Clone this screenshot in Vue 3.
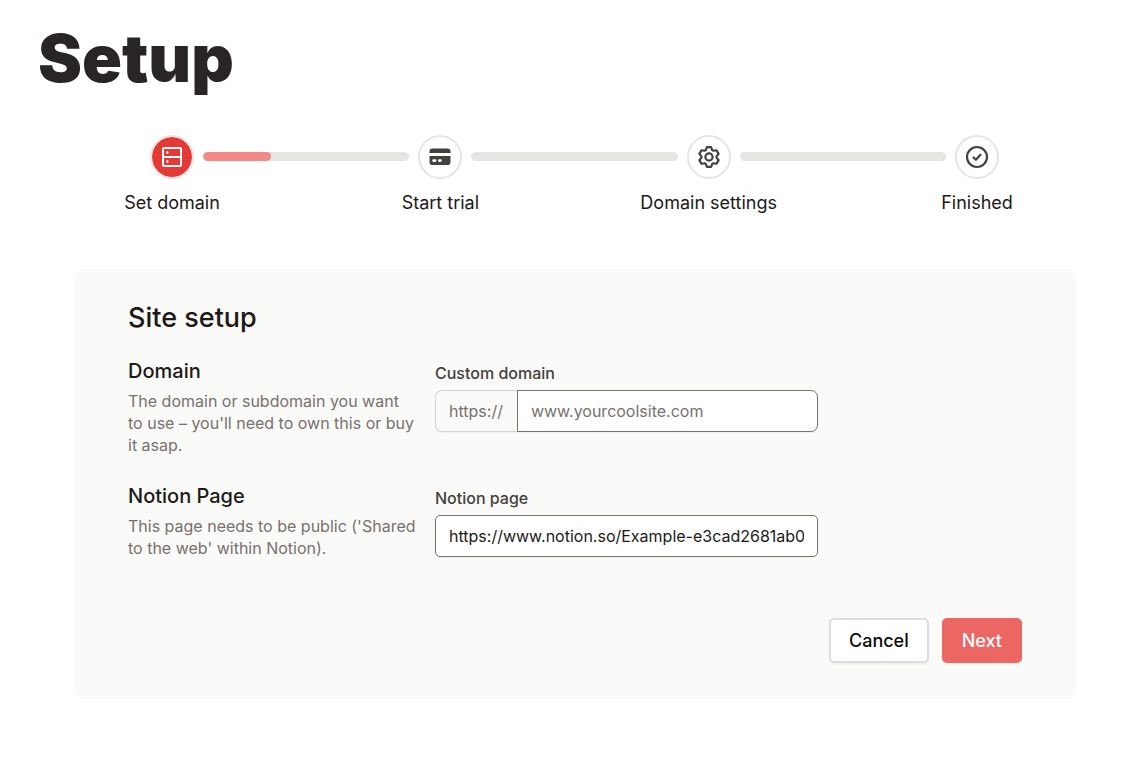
<script setup>
import { ref } from 'vue'

const steps = [
  { label: 'Set domain', icon: 'server', progress: 33, active: true },
  { label: 'Start trial', icon: 'card', progress: 0 },
  { label: 'Domain settings', icon: 'gear', progress: 0 },
  { label: 'Finished', icon: 'check' },
]

// Outline of a six-toothed cog centred on 12,12.
const tooth = [
  [-25, 7.6],
  [-12, 10.1],
  [12, 10.1],
  [25, 7.6],
]
const cogPoints = [0, 60, 120, 180, 240, 300]
  .flatMap((turn) =>
    tooth.map(([angle, radius]) => {
      const a = ((turn + angle) * Math.PI) / 180
      return `${(12 + radius * Math.sin(a)).toFixed(2)},${(12 - radius * Math.cos(a)).toFixed(2)}`
    })
  )
  .join(' ')

const domain = ref('')
const notionPage = ref('https://www.notion.so/Example-e3cad2681ab04f5c9d7e')
</script>

<template>
  <main class="page">
    <h1 class="title">Setup</h1>

    <ol class="stepper">
      <li v-for="step in steps" :key="step.label" class="step" :class="{ last: step.progress === undefined }">
        <div class="marker">
          <span class="circle" :class="{ active: step.active }">
            <svg v-if="step.icon === 'server'" viewBox="0 0 24 24" class="icon" fill="none" stroke="currentColor" stroke-width="2">
              <rect x="3" y="3" width="18" height="18" rx="1" />
              <path d="M3 12h18" />
              <circle cx="7.300" cy="7.500" r="1.200" fill="currentColor" stroke="none" />
              <circle cx="7.300" cy="16.500" r="1.200" fill="currentColor" stroke="none" />
            </svg>
            <svg v-else-if="step.icon === 'card'" viewBox="0 0 24 24" class="icon" fill="currentColor">
              <path d="M4.500 3.500h15A3 3 0 0 1 22.500 6.500V8h-21V6.500A3 3 0 0 1 4.500 3.500z" />
              <path fill-rule="evenodd" d="M1.500 11h21v6.500a2.600 2.600 0 0 1-2.600 2.500H4.100a2.600 2.600 0 0 1-2.600-2.500zM5.500 14.300a1.300 1.300 0 0 0 0 2.600h1.700a1.300 1.300 0 0 0 0-2.600zM11.300 14.300a1.300 1.300 0 0 0 0 2.600h1.200a1.300 1.300 0 0 0 0-2.600z" />
            </svg>
            <svg v-else-if="step.icon === 'gear'" viewBox="0 0 24 24" class="icon" fill="none" stroke="currentColor" stroke-width="2.2" stroke-linejoin="round">
              <polygon :points="cogPoints" />
              <circle cx="12" cy="12" r="3.6" />
            </svg>
            <svg v-else viewBox="0 0 24 24" class="icon" fill="none" stroke="currentColor" stroke-width="2.2" stroke-linecap="round" stroke-linejoin="round">
              <circle cx="12" cy="12" r="10" />
              <path d="M8.500 12.500l2.400 2.300 4.600-5" />
            </svg>
          </span>
          <span class="label">{{ step.label }}</span>
        </div>
        <div v-if="step.progress !== undefined" class="track">
          <div class="fill" :style="{ width: step.progress + '%' }"></div>
        </div>
      </li>
    </ol>

    <form class="card" @submit.prevent>
      <h2 class="heading">Site setup</h2>

      <section class="row">
        <div>
          <h3 class="subheading">Domain</h3>
          <p class="help">The domain or subdomain you want to use – you'll need to own this or buy it asap.</p>
        </div>
        <div class="field">
          <label for="domain">Custom domain</label>
          <div class="group">
            <span class="prefix">https://</span>
            <input id="domain" v-model="domain" class="input joined" type="text" placeholder="www.yourcoolsite.com" />
          </div>
        </div>
      </section>

      <section class="row">
        <div>
          <h3 class="subheading">Notion Page</h3>
          <p class="help">This page needs to be public ('Shared to the web' within Notion).</p>
        </div>
        <div class="field">
          <label for="notion">Notion page</label>
          <div class="group">
            <input id="notion" v-model="notionPage" class="input" type="text" />
          </div>
        </div>
      </section>

      <div class="actions">
        <button type="button" class="button cancel">Cancel</button>
        <button type="submit" class="button next">Next</button>
      </div>
    </form>
  </main>
</template>

<style>
body {
  background: #fff;
}
</style>

<style scoped>
.page,
.page * {
  box-sizing: border-box;
}
.page {
  padding: 20px 21px 68px 38px;
  font-family: Inter, "Liberation Sans", sans-serif;
  color: #1c1917;
}
h1, h2, h3, p, ol {
  margin: 0;
  padding: 0;
}
.title {
  font-size: 66px;
  line-height: 76px;
  font-weight: 900;
  color: #292524;
}
.stepper {
  display: flex;
  list-style: none;
  margin-top: 39px;
  padding: 0 112px;
}
.step {
  flex: 1;
  display: flex;
}
.step.last {
  flex: none;
}
.marker {
  width: 44px;
  flex: none;
  display: flex;
  flex-direction: column;
  align-items: center;
  gap: 12px;
}
.circle {
  width: 44px;
  height: 44px;
  border: 2px solid #e5e5e4;
  border-radius: 50%;
  display: grid;
  place-items: center;
  background: #fff;
  color: #44403c;
}
.circle.active {
  background: #e53935;
  background-clip: padding-box;
  color: #fff;
}
.icon {
  width: 24px;
  height: 24px;
}
.label {
  font-size: 18px;
  line-height: 24px;
  white-space: nowrap;
}
.track {
  flex: 1;
  height: 9px;
  margin: 17px 9px 0;
  border-radius: 5px;
  background: #e5e5e4;
  overflow: hidden;
}
.fill {
  height: 100%;
  border-radius: 5px;
  background: #f28b87;
}
.card {
  margin: 54px 35px 0 36px;
  padding: 32px 54px 36px;
  border-radius: 8px;
  background: #fafaf9;
}
.heading {
  font-size: 27px;
  line-height: 34px;
  font-weight: 500;
  margin-bottom: 20px;
}
.row {
  display: grid;
  grid-template-columns: 288px minmax(0, 383px);
  column-gap: 19px;
  margin-bottom: 24px;
}
.subheading {
  font-size: 20px;
  line-height: 32px;
  font-weight: 500;
}
.help {
  margin-top: 3px;
  font-size: 16px;
  line-height: 22px;
  color: #78716c;
}
.field {
  padding-top: 7px;
}
.field label {
  display: block;
  font-size: 16px;
  line-height: 22px;
  font-weight: 500;
  color: #44403c;
}
.group {
  display: flex;
  margin-top: 6px;
  height: 42px;
  border-radius: 7px;
  box-shadow: 0 1px 2px rgba(0, 0, 0, 0.06);
}
.prefix {
  display: flex;
  align-items: center;
  padding: 0 14px 0 13px;
  border: 1px solid #d6d3d1;
  border-right: 0;
  border-radius: 7px 0 0 7px;
  font-size: 16px;
  color: #78716c;
}
.input {
  flex: 1;
  min-width: 0;
  padding: 0 13px;
  border: 1px solid #78716c;
  border-radius: 5px;
  background: #fff;
  color: #1c1917;
  font-family: inherit;
  font-size: 16px;
}
.input.joined {
  border-radius: 0 7px 7px 0;
}
.input::placeholder {
  color: #78716c;
  opacity: 1;
}
.actions {
  display: flex;
  justify-content: flex-end;
  gap: 13px;
  margin-top: 59px;
}
.button {
  height: 45px;
  padding: 0 18px;
  border: 2px solid #ddd;
  border-radius: 5px;
  font-family: inherit;
  font-size: 18px;
  font-weight: 500;
  box-shadow: 0 1px 2px rgba(0, 0, 0, 0.06);
}
.cancel {
  background: #fff;
  color: #0c0a09;
}
.next {
  background: #ec6764;
  border-color: #ec6764;
  color: #fff;
}
</style>
